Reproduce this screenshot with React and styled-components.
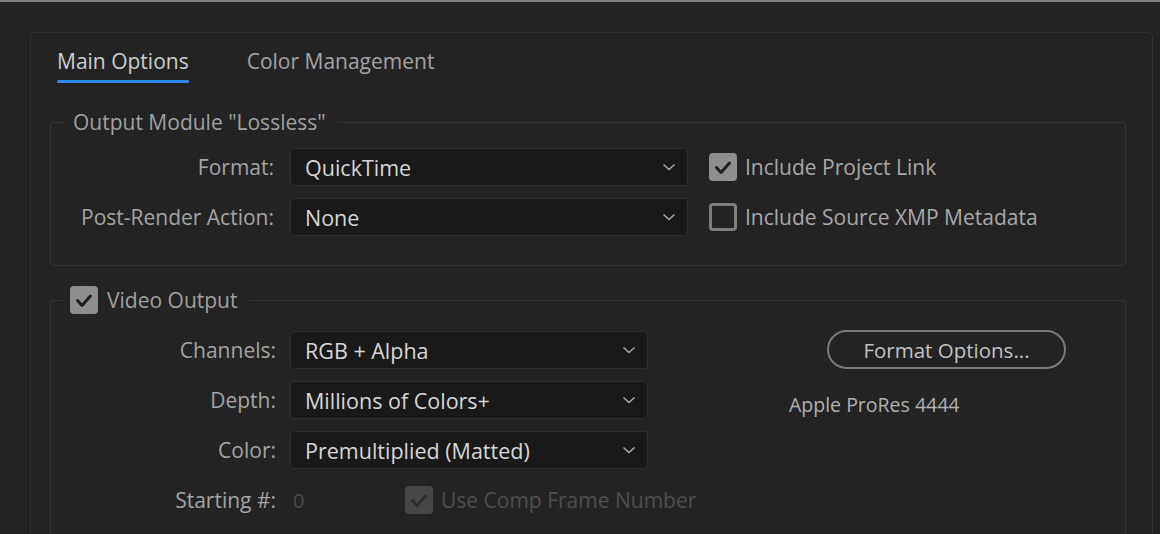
import React from "react";
import styled, { createGlobalStyle } from "styled-components";

const Global = createGlobalStyle`
  html, body { margin: 0; padding: 0; background: #232323; overflow: hidden; }
  body { font-family: "Open Sans", "Noto Sans", sans-serif; }
  * { box-sizing: border-box; }
`;

const Window = styled.div`
  width: 1160px;
  height: 534px;
  background: #232323;
  border-top: 2px solid #7f7f7f;
  padding: 30px 7px 0 30px;
  display: flex;
  flex-direction: column;
`;

const Panel = styled.div`
  flex: 1;
  border: 1px solid #323232;
  border-bottom: none;
  border-radius: 5px 5px 0 0;
  padding: 0 26px 0 19px;
  display: flex;
  flex-direction: column;
`;

const TabBar = styled.div`
  display: flex;
  gap: 54px;
  padding-left: 5px;
`;

const Tab = styled.div`
  padding: 14px 2px 0;
  font-size: 21px;
  line-height: 28px;
  color: ${(p) => (p.$active ? "#cdcdcd" : "#a3a3a3")};
  display: flex;
  flex-direction: column;
  &::after {
    content: "";
    height: 3px;
    margin-top: 5px;
    border-radius: 2px;
    background: ${(p) => (p.$active ? "#2d86ea" : "transparent")};
  }
`;

const Group = styled.fieldset`
  margin: ${(p) => p.$top}px 0 0;
  padding: ${(p) => p.$padTop}px 0 ${(p) => p.$padBottom}px 0;
  border: 1px solid #343434;
  border-radius: 4px;
  min-width: 0;
  ${(p) => (p.$open ? "border-bottom: none; border-radius: 4px 4px 0 0; flex: 1;" : "")}
`;

const Legend = styled.legend`
  margin-left: ${(p) => p.$ml}px;
  padding: 0 12px 0 8px;
  font-size: 21px;
  line-height: 28px;
  color: #a0a0a0;
  display: flex;
  align-items: center;
  gap: 9px;
`;

const Rows = styled.div`
  display: flex;
  flex-direction: column;
  gap: 12px;
`;

const Row = styled.div`
  display: flex;
  align-items: center;
  height: 38px;
`;

const Label = styled.div`
  flex: none;
  width: ${(p) => p.$w}px;
  text-align: right;
  font-size: 21px;
  color: #a4a4a4;
  margin-right: ${(p) => p.$gap}px;
  white-space: nowrap;
`;

const Select = styled.div`
  flex: none;
  width: ${(p) => p.$w}px;
  height: 38px;
  background: #191919;
  border: 1px solid #2f2f2f;
  border-radius: 4px;
  display: flex;
  align-items: center;
  justify-content: space-between;
  padding: 0 11px 0 14px;
  font-size: 21.5px;
  color: #d6d6d6;
`;

const Chevron = () => (
  <svg width="14" height="8" viewBox="0 0 14 8">
    <path d="M1.5 1.5 L7 6.5 L12.5 1.5" fill="none" stroke="#a6a6a6" strokeWidth="1.6" />
  </svg>
);

const CheckRow = styled.label`
  flex: none;
  display: flex;
  align-items: center;
  gap: 8px;
  font-size: 21px;
  color: ${(p) => (p.$disabled ? "#4e4e4e" : "#a8a8a8")};
  margin-left: ${(p) => p.$ml || 0}px;
  white-space: nowrap;
`;

const Box = styled.span`
  width: 28px;
  height: 28px;
  border-radius: 4px;
  flex: none;
  display: flex;
  align-items: center;
  justify-content: center;
  background: ${(p) => (p.$checked ? (p.$disabled ? "#474747" : "#8e8e8e") : "transparent")};
  border: ${(p) => (p.$checked ? "none" : "3px solid #7e7e7e")};
`;

const Checkbox = ({ checked, disabled }) => (
  <Box $checked={checked} $disabled={disabled}>
    {checked && (
      <svg width="28" height="28" viewBox="0 0 28 28">
        <path
          d="M7.5 14.5 L12 19.5 L20.5 10"
          fill="none"
          stroke={disabled ? "#2c2c2c" : "#1f1f1f"}
          strokeWidth="3"
          strokeLinecap="round"
          strokeLinejoin="round"
        />
      </svg>
    )}
  </Box>
);

const NumberValue = styled.div`
  flex: none;
  width: 100px;
  padding-left: 3px;
  font-size: 20px;
  color: #4c4c4c;
`;

const VideoBody = styled.div`
  display: grid;
  grid-template-columns: 597px 1fr;
  align-items: start;
`;

const Side = styled.div`
  margin-left: 141px;
  display: flex;
  flex-direction: column;
  align-items: flex-start;
`;

const PillButton = styled.button`
  margin: -1px 0 0 38px;
  width: 239px;
  height: 39px;
  border: 2px solid #7a7a7a;
  border-radius: 20px;
  background: transparent;
  color: #c2c2c2;
  font-family: inherit;
  font-size: 20.5px;
  padding: 0;
`;

const Info = styled.div`
  margin-top: 22px;
  font-size: 19.5px;
  line-height: 28px;
  color: #b0b0b0;
`;

export default function App() {
  return (
    <>
      <Global />
      <Window>
        <Panel>
          <TabBar>
            <Tab $active>Main Options</Tab>
            <Tab>Color Management</Tab>
          </TabBar>

          <Group $top={25} $padTop={12} $padBottom={29}>
            <Legend $ml={14}>Output Module "Lossless"</Legend>
            <Rows>
              <Row>
                <Label $w={223} $gap={16}>Format:</Label>
                <Select $w={398}>
                  QuickTime
                  <Chevron />
                </Select>
                <CheckRow $ml={21}>
                  <Checkbox checked />
                  Include Project Link
                </CheckRow>
              </Row>
              <Row>
                <Label $w={223} $gap={16}>Post-Render Action:</Label>
                <Select $w={398}>
                  None
                  <Chevron />
                </Select>
                <CheckRow $ml={21}>
                  <Checkbox />
                  Include Source XMP Metadata
                </CheckRow>
              </Row>
            </Rows>
          </Group>

          <Group $top={20} $padTop={17} $padBottom={0} $open>
            <Legend $ml={11}>
              <Checkbox checked />
              Video Output
            </Legend>
            <VideoBody>
              <Rows>
                <Row>
                  <Label $w={225} $gap={14}>Channels:</Label>
                  <Select $w={358}>
                    RGB + Alpha
                    <Chevron />
                  </Select>
                </Row>
                <Row>
                  <Label $w={225} $gap={14}>Depth:</Label>
                  <Select $w={358}>
                    Millions of Colors+
                    <Chevron />
                  </Select>
                </Row>
                <Row>
                  <Label $w={225} $gap={14}>Color:</Label>
                  <Select $w={358}>
                    Premultiplied (Matted)
                    <Chevron />
                  </Select>
                </Row>
                <Row>
                  <Label $w={225} $gap={14}>Starting #:</Label>
                  <NumberValue>0</NumberValue>
                  <CheckRow $disabled $ml={15}>
                    <Checkbox checked disabled />
                    Use Comp Frame Number
                  </CheckRow>
                </Row>
              </Rows>
              <Side>
                <PillButton>Format Options...</PillButton>
                <Info>Apple ProRes 4444</Info>
              </Side>
            </VideoBody>
          </Group>
        </Panel>
      </Window>
    </>
  );
}
